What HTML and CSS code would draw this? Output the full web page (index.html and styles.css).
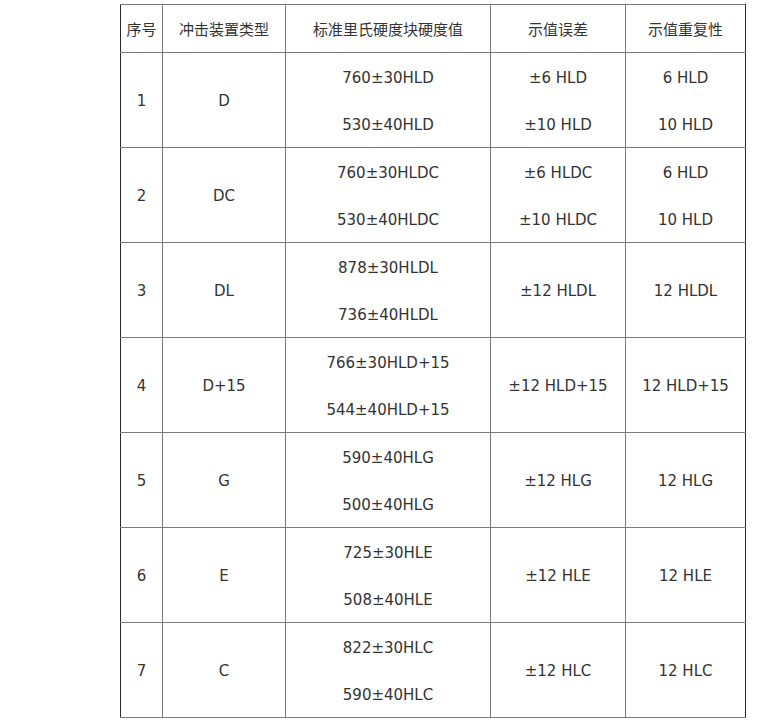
FILE: index.html
```
<!DOCTYPE html>
<html lang="zh">
<head>
<meta charset="utf-8">
<link rel="stylesheet" href="styles.css">
</head>
<body>
<table class="spec">
  <colgroup>
    <col class="c1"><col class="c2"><col class="c3"><col class="c4"><col class="c5">
  </colgroup>
  <thead>
    <tr class="head">
      <th class="first">序号</th>
      <th>冲击装置类型</th>
      <th>标准里氏硬度块硬度值</th>
      <th>示值误差</th>
      <th class="last">示值重复性</th>
    </tr>
  </thead>
  <tbody>
    <tr>
      <td class="first">1</td><td class="soft">D</td>
      <td><div class="pair"><span>760±30HLD</span><span>530±40HLD</span></div></td>
      <td><div class="pair"><span>±6 HLD</span><span>±10 HLD</span></div></td>
      <td class="last"><div class="pair"><span>6 HLD</span><span>10 HLD</span></div></td>
    </tr>
    <tr>
      <td class="first">2</td><td class="soft">DC</td>
      <td><div class="pair"><span>760±30HLDC</span><span>530±40HLDC</span></div></td>
      <td><div class="pair"><span>±6 HLDC</span><span>±10 HLDC</span></div></td>
      <td class="last"><div class="pair"><span>6 HLD</span><span>10 HLD</span></div></td>
    </tr>
    <tr>
      <td class="first">3</td><td class="soft">DL</td>
      <td><div class="pair"><span>878±30HLDL</span><span>736±40HLDL</span></div></td>
      <td>±12 HLDL</td>
      <td class="last">12 HLDL</td>
    </tr>
    <tr>
      <td class="first">4</td><td class="soft">D+15</td>
      <td><div class="pair"><span>766±30HLD+15</span><span>544±40HLD+15</span></div></td>
      <td>±12 HLD+15</td>
      <td class="last">12 HLD+15</td>
    </tr>
    <tr>
      <td class="first">5</td><td class="soft">G</td>
      <td><div class="pair"><span>590±40HLG</span><span>500±40HLG</span></div></td>
      <td>±12 HLG</td>
      <td class="last">12 HLG</td>
    </tr>
    <tr>
      <td class="first">6</td><td class="soft">E</td>
      <td><div class="pair"><span>725±30HLE</span><span>508±40HLE</span></div></td>
      <td>±12 HLE</td>
      <td class="last">12 HLE</td>
    </tr>
    <tr>
      <td class="first">7</td><td class="soft">C</td>
      <td><div class="pair"><span>822±30HLC</span><span>590±40HLC</span></div></td>
      <td>±12 HLC</td>
      <td class="last">12 HLC</td>
    </tr>
  </tbody>
</table>
</body>
</html>
```
FILE: styles.css
```
html, body {
  margin: 0;
  padding: 0;
  background: #ffffff;
}

body {
  font-family: "DejaVu Sans", Verdana, "Noto Sans CJK SC", sans-serif;
  font-size: 15px;
  color: #333333;
}

.spec {
  border-collapse: collapse;
  table-layout: fixed;
  margin: 4px 0 0 120px;
  width: 625px;
}

.c1 { width: 42px; }
.c2 { width: 123px; }
.c3 { width: 205px; }
.c4 { width: 135px; }
.c5 { width: 120px; }

.spec th,
.spec td {
  border: 1px solid #7a7a7a;
  text-align: center;
  vertical-align: middle;
  padding: 0;
  font-weight: normal;
  line-height: 18px;
}

.spec th {
  height: 47px;
  font-family: "Noto Sans CJK SC", "DejaVu Sans", sans-serif;
}

.spec td {
  height: 92px;
  padding-top: 2px;
}

.spec .first {
  border-left-color: #2a2a2a;
}

.spec .last {
  border-right-color: #2a2a2a;
}

.spec .soft {
  border-left-color: #a8a8a8;
}

.head .first + th {
  border-left-color: #7a7a7a;
}

.pair {
  display: flex;
  flex-direction: column;
  align-items: center;
  gap: 29px;
}
```
